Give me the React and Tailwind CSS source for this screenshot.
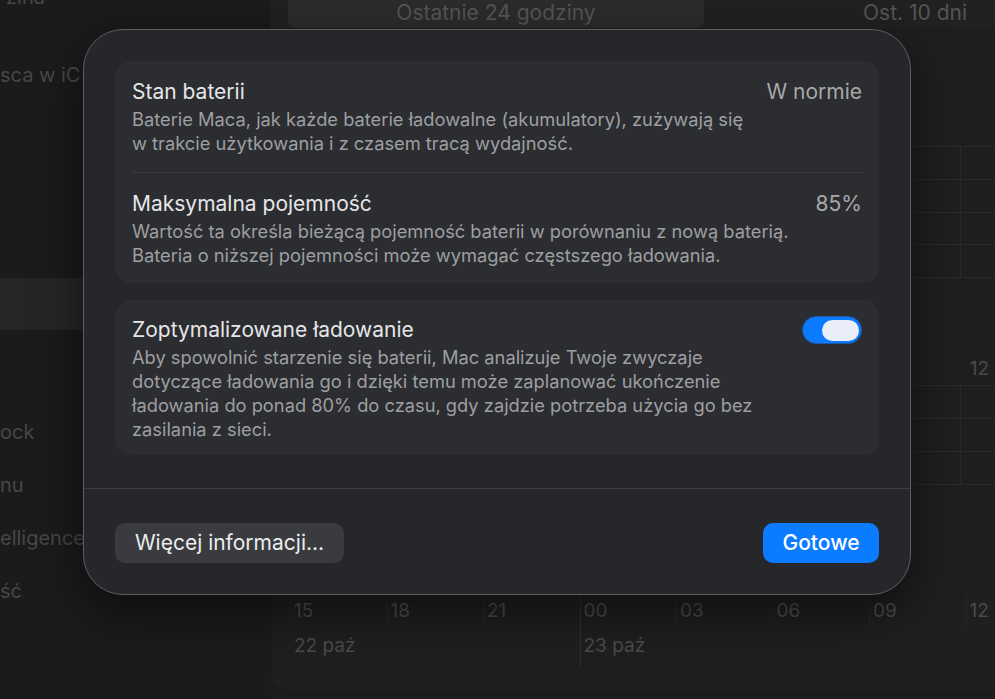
import { useState } from "react";

const hours = ["15", "18", "21", "00", "03", "06", "09", "12"];

function SettingRow({ title, value, lines, children, className }) {
  return (
    <div className={`flex items-start justify-between ${className}`}>
      <div className="flex flex-col">
        <div className="text-[21px] leading-[26px] text-[#e6e6e8]">{title}</div>
        <div className="mt-[2px] text-[18.3px] leading-[24px] text-[#9e9fa2]">
          {lines.map((line) => (
            <span key={line} className="block whitespace-nowrap">
              {line}
            </span>
          ))}
        </div>
      </div>
      {value && <div className="text-[21px] leading-[26px] text-[#a7a8ab]">{value}</div>}
      {children}
    </div>
  );
}

function Toggle({ on, onChange }) {
  return (
    <button
      className={`mt-[-1px] flex h-[28px] w-[60px] items-center rounded-full border border-[#1d56a8] px-[2px] ${
        on ? "justify-end bg-[#0a7bff]" : "justify-start bg-[#4a4c50]"
      }`}
      onClick={() => onChange(!on)}
      type="button"
    >
      <span className="h-[21px] w-[37px] rounded-full bg-[#e9eefa]" />
    </button>
  );
}

function Background() {
  return (
    <div className="flex h-full w-full">
      {/* sidebar, mostly hidden under the sheet */}
      <div className="flex w-[270px] shrink-0 flex-col bg-[#1b1b1b] text-[20px] leading-[26px] text-[#474747]">
        <div className="-mt-[16px] h-[26px] pl-[6px]">zina</div>
        <div className="mt-[52px] h-[26px]">sca w iC</div>
        <div className="mt-[190px] h-[52px] bg-[#262626]" />
        <div className="mt-[89px] h-[26px]">ock</div>
        <div className="mt-[27px] h-[26px]">nu</div>
        <div className="mt-[27px] h-[26px]">elligence</div>
        <div className="mt-[27px] h-[26px]">ść</div>
      </div>

      {/* main */}
      <div className="flex min-w-0 flex-1 flex-col overflow-hidden bg-[#1c1c1c]">
        <div className="flex h-[28px] shrink-0 items-center bg-[#212121] text-[21px] text-[#555]">
          <div className="ml-[18px] flex h-full w-[416px] shrink-0 items-center justify-center rounded-b-[6px] bg-[#2c2c2c] pb-[2px]">
            Ostatnie 24 godziny
          </div>
          <div className="flex flex-1 justify-end pr-[28px] pb-[2px]">Ost. 10 dni</div>
        </div>

        <div className="ml-[2px] flex flex-1 flex-col overflow-hidden rounded-bl-[16px] bg-[#1f1f1f]">
          {/* battery level chart */}
          <div className="relative mt-[118px] h-[132px] shrink-0">
            <div className="flex h-full flex-col justify-between">
              {[0, 1, 2, 3, 4].map((i) => (
                <div key={i} className="h-px bg-[#2a2a2a]" />
              ))}
            </div>
            <div className="absolute right-[34px] top-0 h-full w-px bg-[#2a2a2a]" />
          </div>
          <div className="mt-[78px] flex h-[26px] shrink-0 items-center justify-end pr-[6px] text-[19px] text-[#4b4b4b]">12</div>
          {/* screen usage chart */}
          <div className="relative mt-[3px] h-[100px] shrink-0">
            <div className="flex h-full flex-col justify-between">
              {[0, 1, 2, 3].map((i) => (
                <div key={i} className="h-px bg-[#2a2a2a]" />
              ))}
            </div>
            <div className="absolute right-[34px] top-0 h-full w-px bg-[#2a2a2a]" />
          </div>
          <div className="mt-[111px] flex w-[800px] shrink-0 pl-[18px]">
            {hours.map((h, i) => (
              <div
                key={h}
                className={`flex h-[30px] w-[96.5px] shrink-0 items-center border-l pl-[3px] text-[19px] text-[#4b4b4b] ${
                  i === 3 ? "border-[#303030]" : "border-[#262626]"
                }`}
              >
                {h}
              </div>
            ))}
          </div>
          <div className="flex w-[800px] shrink-0 pl-[18px]">
            <div className="flex h-[40px] w-[289.5px] shrink-0 items-center pl-[4px] text-[19px] text-[#4b4b4b]">22 paź</div>
            <div className="flex h-[40px] items-center border-l border-[#303030] pl-[3px] text-[19px] text-[#4b4b4b]">
              23 paź
            </div>
          </div>
        </div>
        <div className="h-[9px] shrink-0 bg-[#1c1c1c]" />
      </div>
    </div>
  );
}

export default function App() {
  const [optimized, setOptimized] = useState(true);

  return (
    <div className="relative h-[699px] w-[995px] overflow-hidden bg-[#1c1c1c] font-['Inter',sans-serif]">
      <Background />

      <div className="absolute left-[83px] top-[29px] flex w-[828px] flex-col rounded-[40px] border border-[#5b5e62] bg-[#25272a] shadow-[0_16px_50px_rgba(0,0,0,0.55)]">
        <div className="flex flex-col gap-[17px] px-[31px] pt-[31px] pb-[33px]">
          <div className="rounded-[16px] bg-[#2b2d30] px-[17px]">
            <SettingRow
              className="pt-[18px] pb-[17px]"
              title="Stan baterii"
              value="W normie"
              lines={[
                "Baterie Maca, jak każde baterie ładowalne (akumulatory), zużywają się",
                "w trakcie użytkowania i z czasem tracą wydajność.",
              ]}
            />
            <div className="h-px bg-[#3a3c3f]" />
            <SettingRow
              className="pt-[18px] pb-[16px]"
              title="Maksymalna pojemność"
              value="85%"
              lines={[
                "Wartość ta określa bieżącą pojemność baterii w porównaniu z nową baterią.",
                "Bateria o niższej pojemności może wymagać częstszego ładowania.",
              ]}
            />
          </div>

          <div className="rounded-[16px] bg-[#2b2d30] px-[17px]">
            <SettingRow
              className="pt-[17px] pb-[14px]"
              title="Zoptymalizowane ładowanie"
              lines={[
                "Aby spowolnić starzenie się baterii, Mac analizuje Twoje zwyczaje",
                "dotyczące ładowania go i dzięki temu może zaplanować ukończenie",
                "ładowania do ponad 80% do czasu, gdy zajdzie potrzeba użycia go bez",
                "zasilania z sieci.",
              ]}
            >
              <Toggle on={optimized} onChange={setOptimized} />
            </SettingRow>
          </div>
        </div>

        <div className="h-px bg-[#3b3d40]" />

        <div className="flex items-center justify-between px-[31px] pt-[34px] pb-[31px]">
          <button className="h-[40px] w-[229px] rounded-[10px] bg-[#393b3e] text-[21px] text-[#ececee]" type="button">
            Więcej informacji...
          </button>
          <button className="h-[40px] w-[116px] rounded-[10px] bg-[#0b7cff] text-[21px] font-medium text-white" type="button">
            Gotowe
          </button>
        </div>
      </div>
    </div>
  );
}
